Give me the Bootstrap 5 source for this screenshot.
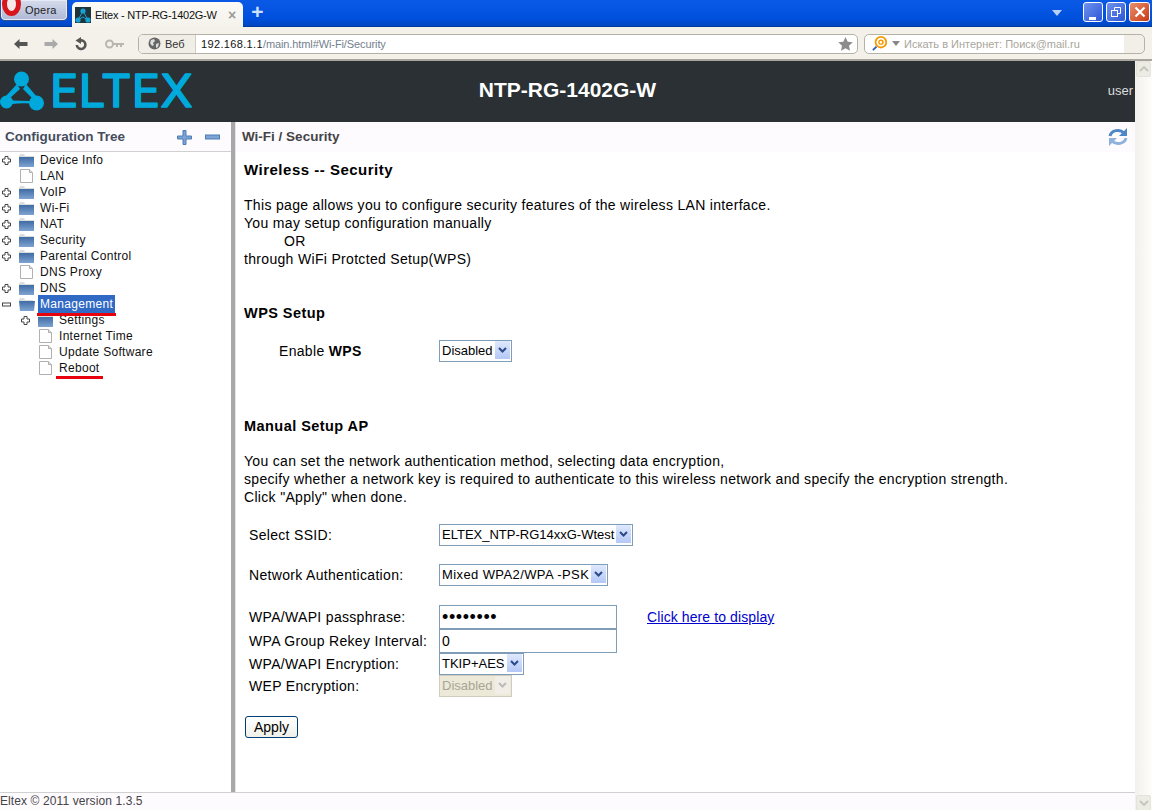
<!DOCTYPE html>
<html lang="en"><head><meta charset="utf-8"><title>Eltex - NTP-RG-1402G-W</title>
<link href="https://cdn.jsdelivr.net/npm/bootstrap@5.3.0/dist/css/bootstrap.min.css" rel="stylesheet">
<style>
html,body{height:810px;overflow:hidden;margin:0;background:#fff}
body{font-family:"Liberation Sans",Arial,sans-serif;font-size:14px;line-height:18px;color:#000;letter-spacing:.32px}
.tabbar{height:27px;background:linear-gradient(#0a5ae6,#0050de 70%,#0046c0);border-bottom:1px solid #003a9c;padding-right:2px;letter-spacing:0}
.opera-btn{width:68px;height:21px;background:linear-gradient(#d6dcec,#aeb8d6);border:1px solid #34508c;border-top:0;border-radius:0 0 5px 5px;font-size:11px;color:#222;box-shadow:inset 0 0 0 1px #e6eaf4;overflow:hidden}
.opera-o{width:19px;height:24px;border:5px solid #d8141c;border-radius:50%;margin-left:1px;margin-top:-12px;flex:none;background:#f4e8e8}
.opera-t{margin-left:4px;letter-spacing:.2px}
.tab{width:171px;height:25px;margin-left:4px;margin-top:2px;background:linear-gradient(#fbfaf6,#f4f2eb);border-radius:5px 5px 0 0;font-size:11px;color:#111;padding-left:3px;white-space:nowrap;letter-spacing:-.25px}
.tab-x{color:#9a9a9a;font-weight:700;font-size:14px;margin-left:auto;margin-right:7px}
.plus{color:#cfe0fb;font-size:21px;font-weight:700;width:15px;margin-left:7px;line-height:24px}
.drop{width:0;height:0;border:5px solid transparent;border-top:6px solid #b9d0f5;border-bottom:0;margin-right:18px}
.win{width:20px;height:20px;border:1px solid #fff;border-radius:3px;background:linear-gradient(135deg,#6f93ee,#2c56d6);margin-left:3px;margin-top:2px}
.win.closew{width:21px;background:linear-gradient(135deg,#e88f6c,#c93a14)}
.toolbar{height:34px;background:#f3f1ea;border-bottom:2px solid #a8a59c;padding:6px 7px 5px 14px;letter-spacing:0}
.addr{width:720px;height:20px;border:1px solid #b5b2a8;border-radius:5px;background:#fff;margin-left:13px;font-size:11px;overflow:hidden;letter-spacing:-.1px}
.veb{width:57px;height:100%;background:#f0eee7;border-right:1px solid #cfcdc4;color:#333;font-size:11px;padding-left:9px;gap:4px}
.urlhost{color:#111;margin-left:5px;letter-spacing:.35px}.urlrest{color:#73818e}
.search{width:281px;height:20px;margin-left:6px;border:1px solid #b5b2a8;border-radius:5px;background:linear-gradient(90deg,#fff 93%,#f1efe8 93%);font-size:11px;color:#a9a59a;padding-left:7px}
.topwrap{height:750px;min-height:0}
.mainpane{min-width:0}
.hdr{height:61px;background:#2a3033;color:#fff;position:relative}
.model{font-weight:700;font-size:21px;color:#fff;position:absolute;left:0;right:0;top:18px;text-align:center;line-height:22px;letter-spacing:0}
.hdr-user{position:absolute;right:2px;top:21px;font-size:13px;color:#ddd;line-height:18px;letter-spacing:0}
.work{height:670px}
.side{width:231px;flex:none;background:#fff}
.side-h{height:30px;background:#fefbff;border-bottom:1px solid #d0d0d0;padding-left:5px;padding-top:1px;color:#444e5c;font-weight:700;font-size:13.5px;letter-spacing:0}
.side-tools{margin-left:auto;margin-right:11px;gap:13px}
.tree{font-size:12px;line-height:16px;letter-spacing:.3px}
.tr{height:16px;display:flex;align-items:center;color:#111}
.ind{padding-left:19px}
.exp{width:13px;margin-left:2px;margin-right:4px;flex:none;display:flex}
.trl{margin-left:4px;padding:0 2px}
.sel{background:#316ac5;color:#fff;position:relative;line-height:18px;margin-left:3px}
.sel::after{content:"";position:absolute;left:-1px;right:-1px;bottom:-3px;height:3px;background:#e8000c}
.redu{position:relative}
.redu::after{content:"";position:absolute;left:-1px;right:-1px;bottom:-3px;height:3px;background:#e8000c}
.splitter{width:5px;flex:none;background:linear-gradient(90deg,#a8a8a8 0 4px,#e4e4e4 4px)}
.content{flex:1;min-width:0;position:relative}
.c-h{height:30px;background:#fefbff;padding-left:6px;color:#444;font-weight:700;font-size:13.5px;letter-spacing:0}
.c-b{padding:9px 0 0 8px}
.h1x{font-weight:700;font-size:15px;line-height:18px;margin:0;letter-spacing:.5px}
.p1{margin:17px 0 0}
.orx{padding-left:40px}
.h2x{font-weight:700;font-size:14.5px;line-height:18px;margin:0;letter-spacing:.45px}
.lbl{width:195px;flex:none;padding-left:5px}
.fake-sel{height:22px;border:1px solid #7f9db9;background:#fff;padding-left:2px;line-height:20px;gap:2px;white-space:nowrap;font-size:13px;letter-spacing:0}
.fake-sel.wide{letter-spacing:.4px}
.fake-sel.off{border-color:#d0cdc0;background:#ece9d8;color:#a8a596}
.arrow{width:15px;height:18px;background:linear-gradient(#dfe8fc,#b4c8f6);margin-right:1px;margin-left:auto;flex:none;display:flex;align-items:center;justify-content:center}
.off .arrow{background:#f0eee6}
.txt{width:178px;height:24px;border:1px solid #7f9db9;background:#fff;padding:0 2px;line-height:22px}
.dots{font-size:18px;letter-spacing:.6px}
.link-d{color:#00c;text-decoration:underline;margin-left:30px;letter-spacing:.1px}
.apply{height:22px;width:53px;margin-left:1px;padding:0;border:1px solid #003c74;border-radius:3px;background:linear-gradient(#fff,#f0f0ea);font-size:14px;line-height:18px;color:#000;display:block}
.refresh{position:absolute;right:7px;top:5px}
.foot{height:19px;background:#fefbff;border-top:1px solid #d0d0d0;font-size:12px;color:#444;line-height:17px;letter-spacing:.1px}
.scroll{width:17px;flex:none;background:linear-gradient(90deg,#f3f1ec,#fdfdfb);display:flex;flex-direction:column;justify-content:space-between;padding-left:1px}
.sbtn{width:15px;height:16px;border:1px solid #e6e3da;border-radius:2px;background:#ecebe4;display:flex;align-items:center;justify-content:center}
.search-drop{border-top-color:#888;border-width:5px 4px 0}
.wps-h{margin-top:36px}.wps-row{margin-top:18px}.wps-lbl{padding-left:35px}
.man-h{margin-top:55px}.ssid-row{margin-top:18px}.auth-row{margin-top:18px}.pass-row{margin-top:19px}
.apply{margin-top:19px}
.fld{fill:url(#fg)}
</style></head><body>
<svg width="0" height="0" class="position-absolute"><defs><linearGradient id="fg" x1="0" y1="0" x2="0" y2="1"><stop offset="0" stop-color="#3f6ca6"/><stop offset="1" stop-color="#7ea4d0"/></linearGradient></defs></svg>
<div class="tabbar d-flex align-items-start">
 <div class="opera-btn d-flex align-items-center"><span class="opera-o"></span><span class="opera-t">Opera</span></div>
 <div class="tab d-flex align-items-center">
  <svg width="16" height="16" viewBox="0 0 16 16"><rect width="16" height="16" fill="#20343c"/><g fill="#16a3d4"><circle cx="8" cy="4" r="2.600"/><circle cx="3" cy="13" r="2.600"/><circle cx="13" cy="13" r="2.600"/></g><path d="M8 4 3 13M8 4l5 9M3 13l5-3 5 3" stroke="#16a3d4" fill="none"/></svg>
  <span class="ms-1">Eltex - NTP-RG-1402G-W</span><span class="tab-x">×</span></div>
 <div class="plus text-center">+</div>
 <div class="ms-auto align-self-center drop"></div>
 <div class="win d-flex align-items-end justify-content-center"><svg width="10" height="6"><rect x="1" y="2" width="7" height="3" fill="#fff"/></svg></div>
 <div class="win d-flex align-items-center justify-content-center"><svg width="12" height="12" fill="none" stroke="#fff"><rect x="1.500" y="4.500" width="6" height="6"/><path d="M4.500 4V1.500h6v6H8"/></svg></div>
 <div class="win closew d-flex align-items-center justify-content-center"><svg width="12" height="12" stroke="#fff" stroke-width="2.200"><path d="M1.500 1.500l9 9M10.500 1.500l-9 9"/></svg></div>
</div>
<div class="toolbar d-flex align-items-center">
 <svg width="14" height="12" viewBox="0 0 14 12"><path d="M0 6l5.500-5v3h8v4h-8v3z" fill="#555"/></svg>
 <svg width="14" height="12" viewBox="0 0 14 12" class="ms-3"><path d="M14 6L8.500 1v3h-8v4h8v3z" fill="#aaa"/></svg>
 <svg width="15" height="14" viewBox="0 0 15 14" class="ms-3" fill="none"><path d="M6 3.500A4.300 4.300 0 1 1 2.800 8" stroke="#555" stroke-width="2.600"/><path d="M7 0L1.500 3.500 7 7z" fill="#555"/></svg>
 <svg width="20" height="10" viewBox="0 0 20 10" class="ms-3"><circle cx="4.500" cy="5" r="3.500" fill="none" stroke="#b8b6ae" stroke-width="2"/><path d="M8 4h11v2h-2v2h-2V6h-2v2h-2V6H8z" fill="#b8b6ae"/></svg>
 <div class="addr d-flex align-items-center">
  <div class="veb d-flex align-items-center"><svg width="13" height="13" viewBox="0 0 13 13"><circle cx="6.500" cy="6.500" r="6" fill="#666"/><path d="M3 3l3-1 1 2-2 2 1 2-2 1-2-3zM8 7l3-1-1 4-2 1z" fill="#ddd"/></svg><span>Веб</span></div>
  <span class="urlhost">192.168.1.1</span><span class="urlrest">/main.html#Wi-Fi/Security</span>
  <svg width="15" height="14" viewBox="0 0 15 14" class="ms-auto me-1"><path d="M7.500 0l2.200 4.700 5.100.6-3.800 3.500 1 5-4.500-2.500-4.500 2.500 1-5L.2 5.300l5.100-.6z" fill="#8c8c8c"/></svg>
 </div>
 <div class="search d-flex align-items-center">
  <svg width="16" height="17" viewBox="0 0 18 17" fill="none"><circle cx="10" cy="7" r="6" stroke="#f59a00" stroke-width="2"/><circle cx="10" cy="7" r="2.200" stroke="#f59a00" stroke-width="1.500"/><path d="M12.200 5v3.500" stroke="#f59a00"/><path d="M1 16l4-4" stroke="#2a5cc0" stroke-width="2"/></svg>
  <span class="drop search-drop ms-1 me-1"></span><span>Искать в Интернет: Поиск@mail.ru</span>
 </div>
</div>
<div class="d-flex topwrap">
 <div class="mainpane flex-grow-1 d-flex flex-column">
  <div class="hdr">
   <svg width="200" height="61" viewBox="0 0 200 61" class="d-block">
    <g fill="#00a9dc"><circle cx="21.500" cy="18" r="7.500"/><circle cx="6.500" cy="41" r="6.500"/><circle cx="36.500" cy="42" r="7.500"/>
    <path d="M17 23L5 36l5 1 10-9zM26 23l11 13-5 1-9-9zM12 39.500q9 0 18 .5v2.500q-9-.5-18 .5z"/></g>
    <text x="50" y="46" font-family="Inter,'Open Sans',sans-serif" font-weight="400" font-size="45" fill="#00a9dc" stroke="#00a9dc" stroke-width="1.600" stroke-linejoin="round" textLength="143" lengthAdjust="spacingAndGlyphs">ELTEX</text>
   </svg>
   <div class="model">NTP-RG-1402G-W</div>
   <div class="hdr-user">user</div>
  </div>
  <div class="work d-flex">
   <div class="side">
    <div class="side-h d-flex align-items-center"><span>Configuration Tree</span>
     <div class="side-tools d-flex align-items-center">
      <svg width="15" height="15" viewBox="0 0 15 15"><path d="M6 .5h3v5.500h5.500v3H9v5.500H6V9H.5V6H6z" fill="#7ba3d4" stroke="#4f7db5"/></svg>
      <svg width="15" height="6" viewBox="0 0 15 6"><rect x=".5" y="1" width="14" height="4" fill="#7ba3d4" stroke="#4f7db5"/></svg>
     </div></div>
    <div class="tree">
     <div class="tr"><span class="exp"><svg width="9" height="9" viewBox="0 0 9 9"><path d="M3 .5h3V3h2.500v3H6v2.500H3V6H.5V3H3z" fill="#fff" stroke="#444"/></svg></span><svg width="15" height="13" viewBox="0 0 15 13"><path d="M0 2l1-2h4l1 2h9v2H0z" fill="#dcdcdc"/><rect class="fld" y="3" width="15" height="10"/></svg><span class="trl">Device Info</span></div>
     <div class="tr"><span class="exp"></span><svg width="15" height="16" viewBox="0 0 15 16"><path d="M1.500 1.500h9l3 3v10h-12z" fill="#fff" stroke="#b0b0b0"/><path d="M10.500 1.500v3h3" fill="#ddd" stroke="#b0b0b0"/></svg><span class="trl">LAN</span></div>
     <div class="tr"><span class="exp"><svg width="9" height="9" viewBox="0 0 9 9"><path d="M3 .5h3V3h2.500v3H6v2.500H3V6H.5V3H3z" fill="#fff" stroke="#444"/></svg></span><svg width="15" height="13" viewBox="0 0 15 13"><path d="M0 2l1-2h4l1 2h9v2H0z" fill="#dcdcdc"/><rect class="fld" y="3" width="15" height="10"/></svg><span class="trl">VoIP</span></div>
     <div class="tr"><span class="exp"><svg width="9" height="9" viewBox="0 0 9 9"><path d="M3 .5h3V3h2.500v3H6v2.500H3V6H.5V3H3z" fill="#fff" stroke="#444"/></svg></span><svg width="15" height="13" viewBox="0 0 15 13"><path d="M0 2l1-2h4l1 2h9v2H0z" fill="#dcdcdc"/><rect class="fld" y="3" width="15" height="10"/></svg><span class="trl">Wi-Fi</span></div>
     <div class="tr"><span class="exp"><svg width="9" height="9" viewBox="0 0 9 9"><path d="M3 .5h3V3h2.500v3H6v2.500H3V6H.5V3H3z" fill="#fff" stroke="#444"/></svg></span><svg width="15" height="13" viewBox="0 0 15 13"><path d="M0 2l1-2h4l1 2h9v2H0z" fill="#dcdcdc"/><rect class="fld" y="3" width="15" height="10"/></svg><span class="trl">NAT</span></div>
     <div class="tr"><span class="exp"><svg width="9" height="9" viewBox="0 0 9 9"><path d="M3 .5h3V3h2.500v3H6v2.500H3V6H.5V3H3z" fill="#fff" stroke="#444"/></svg></span><svg width="15" height="13" viewBox="0 0 15 13"><path d="M0 2l1-2h4l1 2h9v2H0z" fill="#dcdcdc"/><rect class="fld" y="3" width="15" height="10"/></svg><span class="trl">Security</span></div>
     <div class="tr"><span class="exp"><svg width="9" height="9" viewBox="0 0 9 9"><path d="M3 .5h3V3h2.500v3H6v2.500H3V6H.5V3H3z" fill="#fff" stroke="#444"/></svg></span><svg width="15" height="13" viewBox="0 0 15 13"><path d="M0 2l1-2h4l1 2h9v2H0z" fill="#dcdcdc"/><rect class="fld" y="3" width="15" height="10"/></svg><span class="trl">Parental Control</span></div>
     <div class="tr"><span class="exp"></span><svg width="15" height="16" viewBox="0 0 15 16"><path d="M1.500 1.500h9l3 3v10h-12z" fill="#fff" stroke="#b0b0b0"/><path d="M10.500 1.500v3h3" fill="#ddd" stroke="#b0b0b0"/></svg><span class="trl">DNS Proxy</span></div>
     <div class="tr"><span class="exp"><svg width="9" height="9" viewBox="0 0 9 9"><path d="M3 .5h3V3h2.500v3H6v2.500H3V6H.5V3H3z" fill="#fff" stroke="#444"/></svg></span><svg width="15" height="13" viewBox="0 0 15 13"><path d="M0 2l1-2h4l1 2h9v2H0z" fill="#dcdcdc"/><rect class="fld" y="3" width="15" height="10"/></svg><span class="trl">DNS</span></div>
     <div class="tr"><span class="exp"><svg width="9" height="9" viewBox="0 0 9 9"><rect x=".5" y="3" width="8" height="3" fill="#fff" stroke="#444"/></svg></span><svg width="16" height="13" viewBox="0 0 16 13"><path d="M0 2l1-2h4l1 2h8v2H0z" fill="#dcdcdc"/><path class="fld" d="M0 3h16l-1 10H1z"/></svg><span class="trl sel">Management</span></div>
     <div class="tr ind"><span class="exp"><svg width="9" height="9" viewBox="0 0 9 9"><path d="M3 .5h3V3h2.500v3H6v2.500H3V6H.5V3H3z" fill="#fff" stroke="#444"/></svg></span><svg width="15" height="13" viewBox="0 0 15 13"><path d="M0 2l1-2h4l1 2h9v2H0z" fill="#dcdcdc"/><rect class="fld" y="3" width="15" height="10"/></svg><span class="trl">Settings</span></div>
     <div class="tr ind"><span class="exp"></span><svg width="15" height="16" viewBox="0 0 15 16"><path d="M1.500 1.500h9l3 3v10h-12z" fill="#fff" stroke="#b0b0b0"/><path d="M10.500 1.500v3h3" fill="#ddd" stroke="#b0b0b0"/></svg><span class="trl">Internet Time</span></div>
     <div class="tr ind"><span class="exp"></span><svg width="15" height="16" viewBox="0 0 15 16"><path d="M1.500 1.500h9l3 3v10h-12z" fill="#fff" stroke="#b0b0b0"/><path d="M10.500 1.500v3h3" fill="#ddd" stroke="#b0b0b0"/></svg><span class="trl">Update Software</span></div>
     <div class="tr ind"><span class="exp"></span><svg width="15" height="16" viewBox="0 0 15 16"><path d="M1.500 1.500h9l3 3v10h-12z" fill="#fff" stroke="#b0b0b0"/><path d="M10.500 1.500v3h3" fill="#ddd" stroke="#b0b0b0"/></svg><span class="trl redu">Reboot</span></div>
    </div>
   </div>
   <div class="splitter"></div>
   <div class="content">
    <div class="c-h d-flex align-items-center">Wi-Fi / Security</div>
    <svg class="refresh" width="20" height="20" viewBox="0 0 20 20" fill="none"><path d="M2 9a8 7 0 0 1 14-3" stroke="#4f86c6" stroke-width="3"/><path d="M19 1v8h-8z" fill="#4f86c6"/><path d="M18 11a8 7 0 0 1-14 3" stroke="#8fb2dc" stroke-width="3"/><path d="M1 19v-8h8z" fill="#8fb2dc"/></svg>
    <div class="c-b">
     <p class="h1x">Wireless -- Security</p>
     <p class="p1">This page allows you to configure security features of the wireless LAN interface.<br>You may setup configuration manually<br><span class="orx">OR</span><br>through WiFi Protcted Setup(WPS)</p>
     <p class="h2x wps-h">WPS Setup</p>
     <div class="d-flex align-items-center wps-row"><span class="lbl wps-lbl">Enable <b>WPS</b></span><span class="fake-sel d-inline-flex">Disabled<span class="arrow"><svg width="9" height="6"><path d="M1 1l3.500 3.500L8 1" fill="none" stroke="#2a4a8a" stroke-width="2"/></svg></span></span></div>
     <p class="h2x man-h">Manual Setup AP</p>
     <p class="p1">You can set the network authentication method, selecting data encryption,<br>specify whether a network key is required to authenticate to this wireless network and specify the encryption strength.<br>Click "Apply" when done.</p>
     <div class="d-flex align-items-center ssid-row"><span class="lbl">Select SSID:</span><span class="fake-sel d-inline-flex">ELTEX_NTP-RG14xxG-Wtest<span class="arrow"><svg width="9" height="6"><path d="M1 1l3.500 3.500L8 1" fill="none" stroke="#2a4a8a" stroke-width="2"/></svg></span></span></div>
     <div class="d-flex align-items-center auth-row"><span class="lbl">Network Authentication:</span><span class="fake-sel wide d-inline-flex">Mixed WPA2/WPA -PSK<span class="arrow"><svg width="9" height="6"><path d="M1 1l3.500 3.500L8 1" fill="none" stroke="#2a4a8a" stroke-width="2"/></svg></span></span></div>
     <div class="d-flex align-items-center pass-row"><span class="lbl">WPA/WAPI passphrase:</span><span class="txt dots">••••••••</span><a class="link-d" href="#">Click here to display</a></div>
     <div class="d-flex align-items-center"><span class="lbl">WPA Group Rekey Interval:</span><span class="txt">0</span></div>
     <div class="d-flex align-items-center"><span class="lbl">WPA/WAPI Encryption:</span><span class="fake-sel d-inline-flex">TKIP+AES<span class="arrow"><svg width="9" height="6"><path d="M1 1l3.500 3.500L8 1" fill="none" stroke="#2a4a8a" stroke-width="2"/></svg></span></span></div>
     <div class="d-flex align-items-center"><span class="lbl">WEP Encryption:</span><span class="fake-sel off d-inline-flex">Disabled<span class="arrow"><svg width="9" height="6"><path d="M1 1l3.500 3.500L8 1" fill="none" stroke="#bbb" stroke-width="2"/></svg></span></span></div>
     <button type="button" class="apply">Apply</button>
    </div>
   </div>
  </div>
  <div class="foot">Eltex © 2011 version 1.3.5</div>
 </div>
 <div class="scroll">
  <div class="sbtn"><svg width="10" height="6"><path d="M1 5l4-4 4 4" fill="none" stroke="#c8c6bc" stroke-width="2"/></svg></div>
  <div class="sbtn"><svg width="10" height="6"><path d="M1 1l4 4 4-4" fill="none" stroke="#c8c6bc" stroke-width="2"/></svg></div>
 </div>
</div>
</body></html>
